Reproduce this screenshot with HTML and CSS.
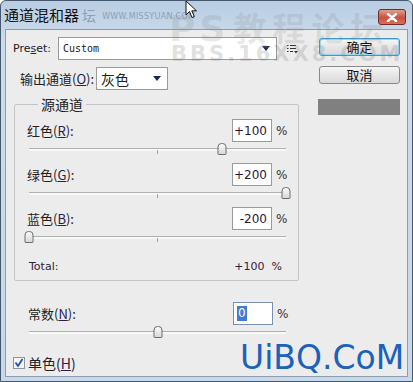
FILE: index.html
```html
<!DOCTYPE html>
<html>
<head>
    <title>通道混和器</title>
    <link rel="stylesheet" href="styles.css">
</head>
<body>
<div class="window">
    <div class="titlebar">
        <span class="title">通道混和器</span>
        <span class="title-mark">坛 <small>WWW.MISSYUAN.COM</small></span>
        <span class="close">
            <svg width="14" height="9" viewBox="0 0 14 9"><path d="M3 1 L11 8 M11 1 L3 8" stroke="#fff" stroke-width="2.4" stroke-linecap="round"/></svg>
        </span>
    </div>

    <div class="client">
        <div class="main">
            <div class="preset-row">
                <label class="preset-label">Pre<u>s</u>et:</label>
                <div class="select preset-select">
                    <span class="mono">Custom</span>
                    <span class="arrow"></span>
                </div>
                <svg class="menu-icon" width="11" height="10" viewBox="0 0 11 10">
                    <path d="M0 1.5h1.5M3 1.5h6M0 4.5h1.5M3 4.5h6M0 7.5h1.5M3 7.5h3" stroke="#333" stroke-width="1"/>
                    <path d="M7 7h4l-2 2.5z" fill="#333"/>
                </svg>
            </div>

            <div class="output-row">
                <label class="output-label">输出通道(<u>O</u>):</label>
                <div class="select output-select">
                    <span>灰色</span>
                    <span class="arrow"></span>
                </div>
            </div>

            <fieldset class="group">
                <legend>源通道</legend>

                <div class="row">
                    <label>红色(<u>R</u>):</label>
                    <div class="num">+100</div>
                    <span class="pct">%</span>
                </div>
                <div class="slider"><span class="tick"></span><span class="thumb" style="left: 75%"></span></div>

                <div class="row">
                    <label>绿色(<u>G</u>):</label>
                    <div class="num">+200</div>
                    <span class="pct">%</span>
                </div>
                <div class="slider"><span class="tick"></span><span class="thumb" style="left: 100%"></span></div>

                <div class="row">
                    <label>蓝色(<u>B</u>):</label>
                    <div class="num">-200</div>
                    <span class="pct">%</span>
                </div>
                <div class="slider"><span class="tick"></span><span class="thumb" style="left: 0%"></span></div>

                <div class="total">
                    <span>Total:</span>
                    <span>+100&nbsp; %</span>
                </div>
            </fieldset>

            <div class="const">
                <div class="row">
                    <label>常数(<u>N</u>):</label>
                    <div class="num focus"><span class="sel">0</span></div>
                    <span class="pct">%</span>
                </div>
                <div class="slider"><span class="tick"></span><span class="thumb" style="left: 50%"></span></div>
            </div>

            <div class="check-row">
                <svg class="check" width="12" height="12" viewBox="0 0 12 12">
                    <rect x="0.5" y="0.5" width="11" height="11" fill="#f4f6f8" stroke="#8a96a4"/>
                    <path d="M2.5 5.5 L5 9 L9.5 2" stroke="#2a4fa8" stroke-width="1.8" fill="none"/>
                </svg>
                <label>单色(<u>H</u>)</label>
            </div>
        </div>

        <div class="side">
            <button class="btn default">确定</button>
            <button class="btn">取消</button>
            <div class="swatch"></div>
        </div>
    </div>

    <!-- watermarks and pointer laid over the dialog -->
    <div class="wm-big"><span class="wm-ps">PS</span>教程论坛</div>
    <div class="wm-bbs">BBS.16XX8.COM</div>
    <div class="wm-uibq">UiBQ.CoM</div>
    <svg class="cursor" width="14" height="20" viewBox="0 0 14 20">
        <path d="M1 1 L1 15 L4.5 11.5 L7 17.5 L9.3 16.5 L6.8 10.8 L11.5 10.8 Z" fill="#fff" stroke="#111" stroke-width="1"/>
    </svg>
</div>
</body>
</html>
```

FILE: styles.css
```css
body {
    margin: 0;
    font-family: "Noto Sans CJK SC", "DejaVu Sans", sans-serif;
    font-size: 13px;
    color: #222;
}
.window {
    position: relative;
    width: 413px;
    height: 382px;
    box-sizing: border-box;
    display: flex;
    flex-direction: column;
    background: linear-gradient(#b8cde2, #cddcec 40px, #c6d8ea);
    border: 1px solid #46586c;
    border-radius: 6px 6px 0 0;
    overflow: hidden;
}
.titlebar {
    height: 28px;
    display: flex;
    align-items: center;
    padding-left: 3px;
}
.title {
    font-size: 15px;
    color: #111;
    line-height: 16px;
}
.title-mark {
    margin-left: 3px;
    font-size: 14px;
    color: #8aa0b6;
}
.title-mark small {
    font-family: "DejaVu Sans", sans-serif;
    font-size: 8px;
    letter-spacing: 0.3px;
    margin-left: 3px;
    vertical-align: 2px;
}
.close {
    margin-left: auto;
    margin-right: 6px;
    margin-top: 4px;
    width: 26px;
    height: 14px;
    border: 1px solid #7a2a24;
    border-radius: 3px;
    background: linear-gradient(#e0a08f, #c9503f 55%, #d8705c);
    display: flex;
    align-items: center;
    justify-content: center;
}
.client {
    flex: 1;
    margin: 0 4px 4px 4px;
    background: #ececec;
    border: 1px solid #8b9cae;
    display: flex;
}
.main {
    width: 299px;
}
.preset-row {
    margin-top: 7px;
    height: 23px;
    display: flex;
    align-items: center;
}
.preset-label {
    width: 45px;
    padding-left: 7px;
    box-sizing: content-box;
    font-family: "DejaVu Sans", sans-serif;
    font-size: 11px;
}
.preset-label, .output-label { flex: none; }
.select {
    height: 23px;
    box-sizing: border-box;
    background: #fff;
    border: 1px solid #9a9a9a;
    display: flex;
    align-items: center;
    padding-left: 4px;
    padding-right: 6px;
}
.select .arrow {
    margin-left: auto;
    width: 0;
    height: 0;
    border-left: 4px solid transparent;
    border-right: 4px solid transparent;
    border-top: 5px solid #1c2a50;
}
.preset-select {
    width: 219px;
}
.mono {
    font-family: "DejaVu Sans Mono", monospace;
    font-size: 10px;
}
.menu-icon {
    margin-left: 10px;
}
.output-row {
    margin-top: 7px;
    height: 23px;
    display: flex;
    align-items: center;
}
.output-label {
    width: 76px;
    padding-left: 14px;
}
.output-select {
    width: 72px;
    font-size: 14px;
}
u {
    color: #2a2050;
}
.group {
    margin: 6px 6px 0 8px;
    padding: 7px 12px 6px 11px;
    border: 1px solid #c4c4c4;
    border-radius: 2px;
    min-width: 0;
}
.group legend {
    margin-left: 12px;
    padding: 0 3px;
    line-height: 16px;
    font-size: 14px;
}
.row {
    height: 23px;
    display: flex;
    align-items: center;
}
.row label {
    flex: 1;
    padding-left: 1px;
}
.num {
    width: 40px;
    height: 23px;
    box-sizing: border-box;
    background: #fff;
    border: 1px solid #9a9a9a;
    font-family: "DejaVu Sans", sans-serif;
    font-size: 12px;
    color: #2a1838;
    display: flex;
    align-items: center;
    justify-content: flex-end;
    padding-right: 4px;
}
.num.focus {
    justify-content: flex-start;
    padding-left: 3px;
    border-color: #7b8fb0;
}
.sel {
    background: #3d7bd6;
    color: #fff;
    padding: 0 1px;
    line-height: 15px;
}
.pct {
    width: 10px;
    margin-left: 4px;
    font-family: "DejaVu Sans", sans-serif;
    font-size: 12px;
    color: #333;
}
.slider {
    position: relative;
    margin: 1px 0 6px 3px;
    width: 257px;
    height: 14px;
    background: linear-gradient(transparent 5px, #b0b0b0 5px, #b0b0b0 6px, #f8f8f8 6px, #f8f8f8 8px, transparent 8px);
}
.tick {
    position: absolute;
    left: 128px;
    top: 7px;
    width: 1px;
    height: 4px;
    background: #a0a0a0;
}
.thumb {
    position: absolute;
    top: 0;
    width: 9px;
    height: 12px;
    transform: translateX(-50%);
    box-sizing: border-box;
    border: 1px solid #6c6c6c;
    border-radius: 4px 4px 1px 1px;
    background: linear-gradient(#fafafa, #d8d8d8);
}
.total {
    margin-top: 13px;
    height: 16px;
    display: flex;
    justify-content: space-between;
    align-items: center;
    padding-left: 3px;
    padding-right: 4px;
    font-family: "DejaVu Sans", sans-serif;
    font-size: 11px;
    color: #30203a;
}
.const {
    margin: 21px 0 0 20px;
    width: 261px;
}
.const .row label {
    padding-left: 2px;
}
.check-row {
    margin-top: 16px;
    height: 13px;
    display: flex;
    align-items: center;
    padding-left: 7px;
}
.check-row label {
    margin-left: 3px;
    font-size: 14px;
}
.side {
    padding-left: 14px;
    padding-top: 8px;
    display: flex;
    flex-direction: column;
}
.btn {
    width: 81px;
    height: 18px;
    padding: 0;
    font-family: "Noto Sans CJK SC", sans-serif;
    font-size: 13px;
    line-height: 14px;
    color: #111;
    background: linear-gradient(#f6f6f6, #e6e6e6 50%, #d9d9d9);
    border: 1px solid #8a8a8a;
    border-radius: 3px;
}
.btn + .btn {
    margin-top: 10px;
}
.btn.default {
    border-color: #3a9ac8;
    box-shadow: inset 0 0 0 1px #9ad8f0;
}
.swatch {
    margin-top: 15px;
    margin-left: -1px;
    width: 82px;
    height: 16px;
    background: #808080;
}
.wm-big {
    position: absolute;
    left: 168px;
    top: 6px;
    font-family: "Noto Sans CJK SC", sans-serif;
    font-weight: bold;
    font-size: 33px;
    line-height: 40px;
    letter-spacing: 6px;
    color: rgba(120, 120, 120, 0.16);
}
.wm-ps {
    font-family: "DejaVu Sans", sans-serif;
    font-size: 36px;
    letter-spacing: 4px;
    margin-right: 4px;
}
.wm-bbs {
    position: absolute;
    left: 170px;
    top: 41px;
    font-family: "DejaVu Sans", sans-serif;
    font-weight: bold;
    font-size: 21px;
    letter-spacing: 3px;
    color: rgba(120, 120, 120, 0.24);
}
.wm-uibq {
    position: absolute;
    left: 239px;
    top: 337px;
    font-family: "DejaVu Sans", sans-serif;
    font-size: 33px;
    color: #1a62ba;
}
.cursor {
    position: absolute;
    left: 184px;
    top: -1px;
}
```
